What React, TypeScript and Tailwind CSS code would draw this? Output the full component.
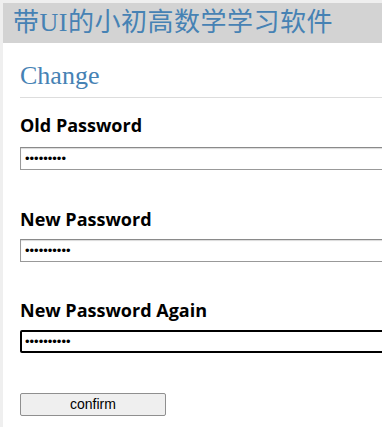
const fields = [
  { label: "Old Password", value: "123456789", gap: "mt-[15px]", inputGap: "mt-[10px]" },
  { label: "New Password", value: "1234567890", gap: "mt-[37px]", inputGap: "mt-[8px]" },
  { label: "New Password Again", value: "1234567890", gap: "mt-[36px]", inputGap: "mt-[8px]", focused: true },
];

export default function App() {
  return (
    <div className="h-[427px] w-full overflow-hidden bg-[#efefef] pl-[3px] pt-[3px]">
      <div className="h-full bg-white">
        {/* Header */}
        <div className="flex h-[40px] items-center bg-[#d3d3d3] pl-[10px]">
          <h1
            className="whitespace-nowrap text-[26px] leading-none tracking-[0.5px] text-[#4682b4]"
            style={{ fontFamily: '"Liberation Serif", "Noto Sans CJK SC", serif' }}
          >
            带UI的小初高数学学习软件
          </h1>
        </div>

        {/* Form */}
        <div className="ml-[17px]">
          <div className="border-b border-[#dddddd] pt-[18px] pb-[6px]">
            <h2
              className="text-[26px] leading-[30px] text-[#4682b4]"
              style={{ fontFamily: '"Liberation Serif", serif' }}
            >
              Change
            </h2>
          </div>

          {fields.map((f) => (
            <div key={f.label} className={f.gap}>
              <label
                className="block text-[18px] font-bold leading-[24px] text-black"
                style={{ fontFamily: '"Open Sans", sans-serif' }}
              >
                {f.label}
              </label>
              <input
                type="password"
                readOnly
                value={f.value}
                className={
                  f.focused
                    ? `${f.inputGap} block h-[23px] w-[400px] rounded-[2px] border-2 border-black bg-white px-[3px] text-[13px] outline-none`
                    : `${f.inputGap} block h-[23px] w-[400px] border border-[#999999] border-t-[#8a8a8a] bg-white px-[4px] text-[13px] shadow-[inset_0_1px_1px_rgba(0,0,0,0.15)] outline-none`
                }
                style={{ fontFamily: '"Liberation Sans", sans-serif' }}
              />
            </div>
          ))}

          <button
            className="mt-[40px] block h-[23px] w-[146px] rounded-[2px] border border-[#8f8f8f] bg-[#efefef] text-[14px] text-black"
            style={{ fontFamily: '"Liberation Sans", sans-serif' }}
          >
            confirm
          </button>
        </div>
      </div>
    </div>
  );
}
